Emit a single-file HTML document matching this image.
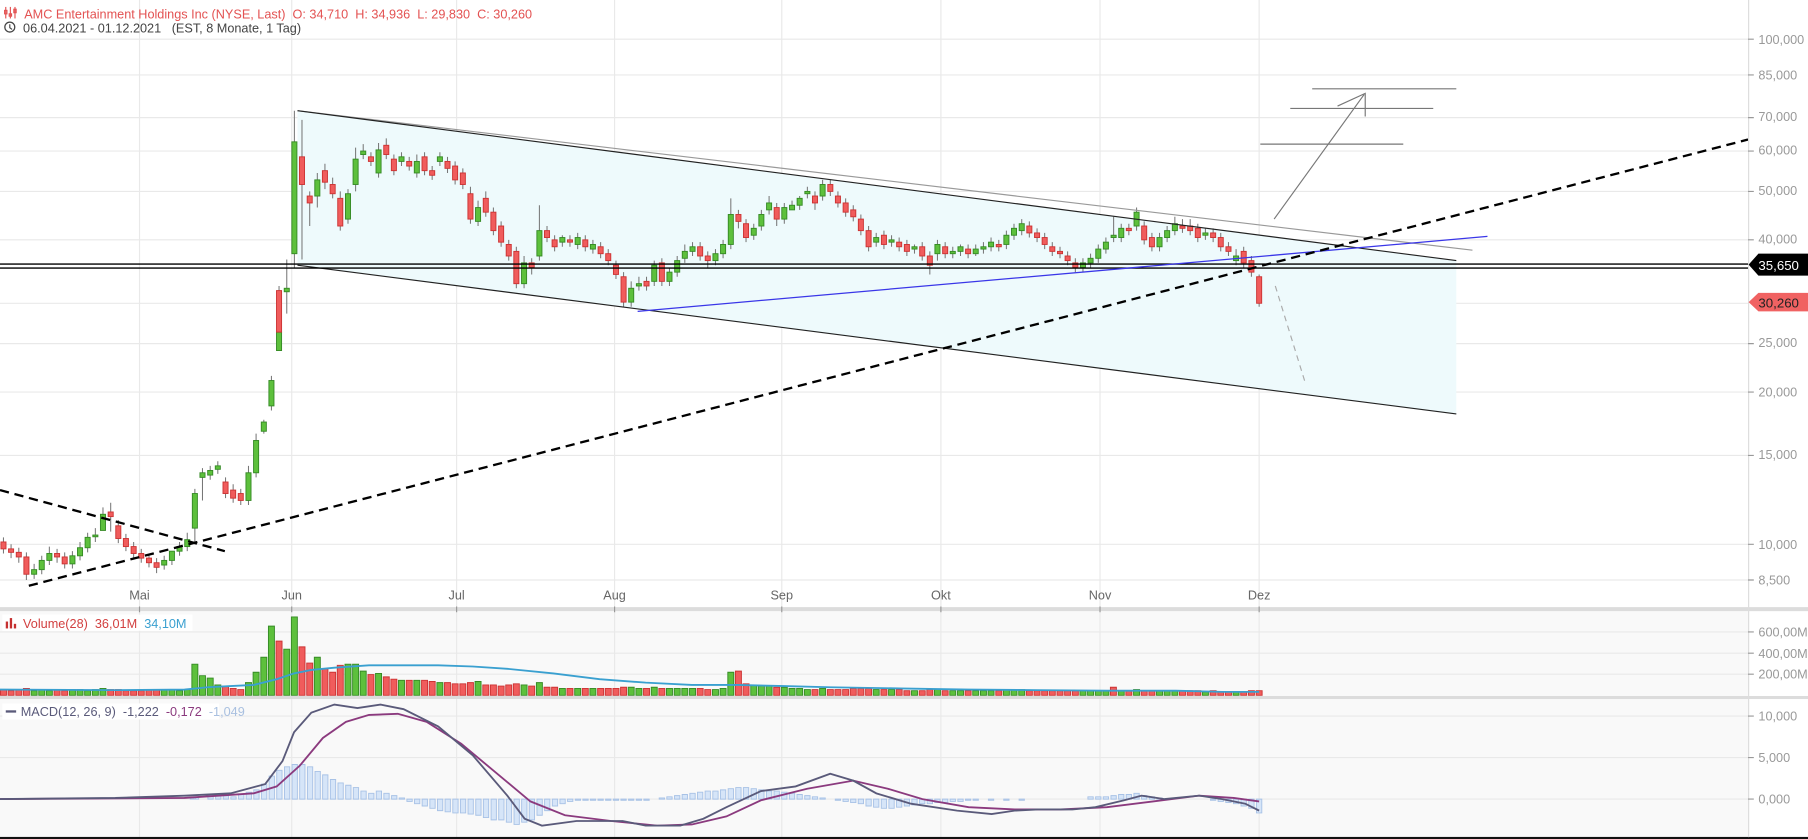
<!DOCTYPE html>
<html><head><meta charset="utf-8"><style>
html,body{margin:0;padding:0;background:#fff;overflow:hidden}
svg{display:block}
text{font-family:"Liberation Sans",Arial,sans-serif}
.g{fill:#5dc03c;stroke:#358a25;stroke-width:.8}
.r{fill:#f05c5c;stroke:#c33;stroke-width:.8}
.h{fill:#d6e5f8;stroke:#a8c2e6;stroke-width:.8}
</style></head><body>
<svg width="1808" height="839" viewBox="0 0 1568 727.6" preserveAspectRatio="none" xmlns="http://www.w3.org/2000/svg">
<rect x="0" y="0" width="1568" height="728" fill="#fff"/>
<rect x="0" y="530" width="1516" height="73.6" fill="#f9f9f9"/>
<rect x="0" y="606.2" width="1516" height="119.6" fill="#f9f9f9"/>
<g stroke="#e9e9e9" stroke-width="1">
<path d="M0 34H1516M0 65H1516M0 102H1516M0 131H1516M0 166H1516M0 208H1516M0 263H1516M0 298H1516M0 340H1516M0 395H1516M0 472H1516M0 503H1516M0 548H1516M0 566.5H1516M0 584.7H1516M0 621H1516M0 657H1516M0 693H1516"/>
<path d="M121 0V726M253 0V726M396 0V726M533 0V726M678 0V726M816 0V726M954 0V726M1092 0V726"/>
</g>
<polygon points="258,96 1263,226 1263,359 258,230" fill="#eefafc"/>

<!-- wicks -->
<path fill="none" stroke="#777" stroke-width="0.9" d="M3 466V480M9.6 472V484M16.3 475V488M22.9 479V503M29.6 489V502M36.2 482V498M42.8 474V490M49.5 476V488M56.1 479V493M62.8 478V493M69.4 470V486M76 462V479M82.7 458V470M89.3 440V456M96 436V461M102.6 451V471M109.2 463V478M115.9 470V484M122.5 476V488M129.2 480V492M135.8 484V497M142.4 482V494M149.1 478V490M155.7 470V482M162.4 462V478M169 424V472M175.6 406V434M182.3 404V416M188.9 400V411M195.6 414V432M202.2 420V436M208.8 424V438M215.5 404V438M222.1 376V414M228.8 364V376M235.4 326V356M242 248V300M248.7 225V272M255.3 96V232M261.9 104V225M268.6 166V196M275.2 150V180M281.8 142V164M288.5 154V172M295.1 166V200M301.8 164V194M308.4 128V166M315 125V138M321.7 132V144M328.3 124V154M335 120V138M341.6 134V152M348.2 132V144M354.9 136V148M361.5 134V154M368.2 132V152M374.8 144V156M381.5 132V144M388.1 136V150M394.7 140V160M401.4 146V164M408 162V194M414.6 174V196M421.3 166V188M427.9 180V204M434.6 192V214M441.2 208V226M447.8 214V250M454.5 222V250M461.1 224V238M467.8 178V226M474.4 196V210M481 204V218M487.7 204V214M494.3 204V214M501 202V216M507.6 204V218M514.2 208V220M520.9 210V224M527.5 216V230M534.2 226V242M540.8 236V266M547.4 244V266M554.1 240V252M560.7 240V252M567.4 226V248M574 224V248M580.6 232V248M587.3 222V240M593.9 212V228M600.6 210V222M607.2 210V226M613.8 218V232M620.5 216V230M627.1 208V224M633.8 172V216M640.4 182V198M647 190V210M653.7 194V208M660.3 182V200M667 170V186M673.6 176V196M680.2 176V194M686.9 174V182M693.5 170V182M700.2 162V172M706.8 166V182M713.4 156V174M720.1 156V170M726.7 166V180M733.4 172V188M740 178V192M746.6 186V204M753.3 196V218M759.9 202V214M766.6 200V216M773.2 204V214M779.8 206V218M786.5 208V222M793.1 212V220M799.8 210V226M806.4 218V238M813 208V226M819.7 210V224M826.3 214V224M833 212V222M839.6 212V224M846.2 212V222M852.9 210V220M859.5 206V218M866.2 208V218M872.8 200V216M879.4 194V208M886.1 190V204M892.7 192V206M899.4 198V210M906 202V216M912.6 210V222M919.3 214V224M925.9 218V230M932.6 224V236M939.2 224V236M945.8 220V232M952.5 212V228M959.1 206V220M965.8 188V210M972.4 194V210M979 194V204M985.7 180V200M992.3 192V212M999 202V218M1005.6 202V218M1012.2 196V210M1018.9 188V204M1025.5 190V202M1032.2 190V204M1038.8 194V210M1045.4 198V208M1052.1 198V210M1058.7 202V218M1065.4 210V222M1072 216V230M1078.6 214V232M1085.3 222V240M1092 238V266"/>

<!-- bodies -->
<rect class="r" x="0.8" y="470" width="4.4" height="6"/>
<rect class="r" x="7.4" y="476" width="4.4" height="3"/>
<rect class="r" x="14.1" y="479" width="4.4" height="4"/>
<rect class="r" x="20.7" y="483" width="4.4" height="15"/>
<rect class="g" x="27.4" y="494" width="4.4" height="4"/>
<rect class="g" x="34" y="486" width="4.4" height="8"/>
<rect class="g" x="40.6" y="480" width="4.4" height="6"/>
<rect class="r" x="47.3" y="480" width="4.4" height="3"/>
<rect class="r" x="53.9" y="483" width="4.4" height="6"/>
<rect class="g" x="60.6" y="482" width="4.4" height="7"/>
<rect class="g" x="67.2" y="475" width="4.4" height="7"/>
<rect class="g" x="73.8" y="466" width="4.4" height="9"/>
<rect class="g" x="80.5" y="464" width="4.4" height="1.5"/>
<rect class="g" x="87.1" y="446" width="4.4" height="14"/>
<rect class="r" x="93.8" y="444" width="4.4" height="4"/>
<rect class="r" x="100.4" y="456" width="4.4" height="11"/>
<rect class="r" x="107" y="467" width="4.4" height="7"/>
<rect class="r" x="113.7" y="474" width="4.4" height="6"/>
<rect class="r" x="120.3" y="480" width="4.4" height="4"/>
<rect class="r" x="127" y="484" width="4.4" height="4"/>
<rect class="r" x="133.6" y="488" width="4.4" height="4"/>
<rect class="g" x="140.2" y="486" width="4.4" height="4"/>
<rect class="g" x="146.9" y="478" width="4.4" height="8"/>
<rect class="g" x="153.5" y="474" width="4.4" height="4"/>
<rect class="g" x="160.2" y="468" width="4.4" height="6"/>
<rect class="g" x="166.8" y="428" width="4.4" height="30"/>
<rect class="g" x="173.4" y="410" width="4.4" height="4"/>
<rect class="g" x="180.1" y="408" width="4.4" height="4"/>
<rect class="g" x="186.7" y="404" width="4.4" height="3"/>
<rect class="r" x="193.4" y="418" width="4.4" height="10"/>
<rect class="r" x="200" y="425" width="4.4" height="7"/>
<rect class="r" x="206.6" y="428" width="4.4" height="6"/>
<rect class="g" x="213.3" y="410" width="4.4" height="24"/>
<rect class="g" x="219.9" y="382" width="4.4" height="28"/>
<rect class="g" x="226.6" y="366" width="4.4" height="8"/>
<rect class="g" x="233.2" y="330" width="4.4" height="22"/>
<rect class="g" x="239.8" y="288" width="4.4" height="16"/>
<rect class="r" x="239.8" y="252" width="4.4" height="36"/>
<rect class="g" x="246.5" y="250" width="4.4" height="3"/>
<rect class="g" x="253.1" y="123" width="4.4" height="97"/>
<rect class="r" x="259.7" y="136" width="4.4" height="24"/>
<rect class="r" x="266.4" y="170" width="4.4" height="6"/>
<rect class="g" x="273" y="156" width="4.4" height="14"/>
<rect class="r" x="279.6" y="148" width="4.4" height="10"/>
<rect class="r" x="286.3" y="160" width="4.4" height="8"/>
<rect class="r" x="292.9" y="172" width="4.4" height="24"/>
<rect class="g" x="299.6" y="168" width="4.4" height="22"/>
<rect class="g" x="306.2" y="138" width="4.4" height="22"/>
<rect class="g" x="312.8" y="131" width="4.4" height="3"/>
<rect class="r" x="319.5" y="136" width="4.4" height="4"/>
<rect class="g" x="326.1" y="130" width="4.4" height="20"/>
<rect class="r" x="332.8" y="126" width="4.4" height="8"/>
<rect class="r" x="339.4" y="138" width="4.4" height="10"/>
<rect class="g" x="346" y="136" width="4.4" height="4"/>
<rect class="r" x="352.7" y="140" width="4.4" height="4"/>
<rect class="g" x="359.3" y="140" width="4.4" height="10"/>
<rect class="r" x="366" y="136" width="4.4" height="12"/>
<rect class="r" x="372.6" y="148" width="4.4" height="4"/>
<rect class="g" x="379.3" y="136" width="4.4" height="4"/>
<rect class="r" x="385.9" y="140" width="4.4" height="6"/>
<rect class="r" x="392.5" y="144" width="4.4" height="12"/>
<rect class="r" x="399.2" y="150" width="4.4" height="10"/>
<rect class="r" x="405.8" y="168" width="4.4" height="22"/>
<rect class="g" x="412.4" y="180" width="4.4" height="12"/>
<rect class="r" x="419.1" y="172" width="4.4" height="12"/>
<rect class="r" x="425.7" y="184" width="4.4" height="16"/>
<rect class="r" x="432.4" y="196" width="4.4" height="14"/>
<rect class="r" x="439" y="212" width="4.4" height="10"/>
<rect class="r" x="445.6" y="218" width="4.4" height="28"/>
<rect class="g" x="452.3" y="228" width="4.4" height="18"/>
<rect class="r" x="458.9" y="228" width="4.4" height="4"/>
<rect class="g" x="465.6" y="200" width="4.4" height="22"/>
<rect class="r" x="472.2" y="200" width="4.4" height="6"/>
<rect class="r" x="478.8" y="208" width="4.4" height="6"/>
<rect class="g" x="485.5" y="206" width="4.4" height="4"/>
<rect class="r" x="492.1" y="208" width="4.4" height="2"/>
<rect class="g" x="498.8" y="206" width="4.4" height="6"/>
<rect class="r" x="505.4" y="208" width="4.4" height="6"/>
<rect class="g" x="512" y="212" width="4.4" height="4"/>
<rect class="r" x="518.7" y="214" width="4.4" height="6"/>
<rect class="r" x="525.3" y="220" width="4.4" height="6"/>
<rect class="r" x="532" y="230" width="4.4" height="8"/>
<rect class="r" x="538.6" y="240" width="4.4" height="22"/>
<rect class="g" x="545.2" y="250" width="4.4" height="12"/>
<rect class="g" x="551.9" y="246" width="4.4" height="2"/>
<rect class="r" x="558.5" y="244" width="4.4" height="4"/>
<rect class="g" x="565.2" y="230" width="4.4" height="14"/>
<rect class="r" x="571.8" y="228" width="4.4" height="16"/>
<rect class="g" x="578.4" y="236" width="4.4" height="8"/>
<rect class="g" x="585.1" y="226" width="4.4" height="10"/>
<rect class="g" x="591.7" y="218" width="4.4" height="6"/>
<rect class="g" x="598.4" y="214" width="4.4" height="4"/>
<rect class="r" x="605" y="214" width="4.4" height="8"/>
<rect class="r" x="611.6" y="222" width="4.4" height="4"/>
<rect class="g" x="618.3" y="220" width="4.4" height="6"/>
<rect class="g" x="624.9" y="212" width="4.4" height="8"/>
<rect class="g" x="631.6" y="186" width="4.4" height="26"/>
<rect class="r" x="638.2" y="186" width="4.4" height="6"/>
<rect class="r" x="644.8" y="194" width="4.4" height="12"/>
<rect class="g" x="651.5" y="198" width="4.4" height="6"/>
<rect class="g" x="658.1" y="186" width="4.4" height="10"/>
<rect class="g" x="664.8" y="176" width="4.4" height="6"/>
<rect class="r" x="671.4" y="180" width="4.4" height="10"/>
<rect class="g" x="678" y="180" width="4.4" height="10"/>
<rect class="g" x="684.7" y="178" width="4.4" height="4"/>
<rect class="g" x="691.3" y="172" width="4.4" height="6"/>
<rect class="g" x="698" y="166" width="4.4" height="2"/>
<rect class="r" x="704.6" y="170" width="4.4" height="6"/>
<rect class="g" x="711.2" y="160" width="4.4" height="10"/>
<rect class="r" x="717.9" y="160" width="4.4" height="6"/>
<rect class="r" x="724.5" y="170" width="4.4" height="6"/>
<rect class="r" x="731.2" y="176" width="4.4" height="8"/>
<rect class="r" x="737.8" y="182" width="4.4" height="6"/>
<rect class="r" x="744.4" y="190" width="4.4" height="10"/>
<rect class="r" x="751.1" y="200" width="4.4" height="14"/>
<rect class="g" x="757.7" y="206" width="4.4" height="4"/>
<rect class="r" x="764.4" y="204" width="4.4" height="8"/>
<rect class="g" x="771" y="208" width="4.4" height="2"/>
<rect class="r" x="777.6" y="210" width="4.4" height="4"/>
<rect class="r" x="784.3" y="212" width="4.4" height="6"/>
<rect class="g" x="790.9" y="214" width="4.4" height="2"/>
<rect class="r" x="797.6" y="214" width="4.4" height="8"/>
<rect class="r" x="804.2" y="222" width="4.4" height="8"/>
<rect class="g" x="810.8" y="212" width="4.4" height="8"/>
<rect class="r" x="817.5" y="214" width="4.4" height="6"/>
<rect class="g" x="824.1" y="218" width="4.4" height="2"/>
<rect class="g" x="830.8" y="214" width="4.4" height="4"/>
<rect class="r" x="837.4" y="216" width="4.4" height="4"/>
<rect class="g" x="844" y="216" width="4.4" height="4"/>
<rect class="g" x="850.7" y="214" width="4.4" height="2"/>
<rect class="g" x="857.3" y="210" width="4.4" height="4"/>
<rect class="r" x="864" y="212" width="4.4" height="2"/>
<rect class="g" x="870.6" y="204" width="4.4" height="8"/>
<rect class="g" x="877.2" y="198" width="4.4" height="6"/>
<rect class="g" x="883.9" y="194" width="4.4" height="6"/>
<rect class="r" x="890.5" y="196" width="4.4" height="6"/>
<rect class="r" x="897.2" y="202" width="4.4" height="4"/>
<rect class="r" x="903.8" y="206" width="4.4" height="6"/>
<rect class="r" x="910.4" y="214" width="4.4" height="4"/>
<rect class="r" x="917.1" y="218" width="4.4" height="2"/>
<rect class="r" x="923.7" y="222" width="4.4" height="4"/>
<rect class="r" x="930.4" y="228" width="4.4" height="4"/>
<rect class="g" x="937" y="228" width="4.4" height="4"/>
<rect class="g" x="943.6" y="224" width="4.4" height="4"/>
<rect class="g" x="950.3" y="216" width="4.4" height="8"/>
<rect class="g" x="956.9" y="210" width="4.4" height="6"/>
<rect class="g" x="963.6" y="204" width="4.4" height="2"/>
<rect class="g" x="970.2" y="198" width="4.4" height="8"/>
<rect class="r" x="976.8" y="198" width="4.4" height="2"/>
<rect class="g" x="983.5" y="184" width="4.4" height="12"/>
<rect class="r" x="990.1" y="196" width="4.4" height="12"/>
<rect class="r" x="996.8" y="206" width="4.4" height="8"/>
<rect class="g" x="1003.4" y="206" width="4.4" height="8"/>
<rect class="g" x="1010" y="200" width="4.4" height="6"/>
<rect class="g" x="1016.7" y="194" width="4.4" height="6"/>
<rect class="r" x="1023.3" y="196" width="4.4" height="2"/>
<rect class="r" x="1030" y="196" width="4.4" height="4"/>
<rect class="r" x="1036.6" y="198" width="4.4" height="8"/>
<rect class="g" x="1043.2" y="202" width="4.4" height="2"/>
<rect class="r" x="1049.9" y="202" width="4.4" height="4"/>
<rect class="r" x="1056.5" y="206" width="4.4" height="8"/>
<rect class="r" x="1063.2" y="214" width="4.4" height="4"/>
<rect class="g" x="1069.8" y="222" width="4.4" height="4"/>
<rect class="r" x="1076.4" y="218" width="4.4" height="10"/>
<rect class="r" x="1083.1" y="226" width="4.4" height="10"/>
<rect class="r" x="1089.8" y="240" width="4.4" height="23"/>

<!-- volume bars -->
<g>
<path fill="#f05c5c" stroke="#c33" stroke-width=".8" d="M0.4 598h5.2v5h-5.2zM7 599h5.2v4h-5.2zM13.7 598h5.2v5h-5.2zM20.3 597h5.2v6h-5.2zM46.9 598h5.2v5h-5.2zM53.5 599h5.2v4h-5.2zM93.4 598h5.2v5h-5.2zM100 598h5.2v5h-5.2zM106.6 599h5.2v4h-5.2zM113.3 599h5.2v4h-5.2zM119.9 599h5.2v4h-5.2zM126.6 598h5.2v5h-5.2zM133.2 598h5.2v5h-5.2zM193 595h5.2v8h-5.2zM199.6 597h5.2v6h-5.2zM206.2 598h5.2v5h-5.2zM239.4 556h5.2v47h-5.2zM259.3 561h5.2v42h-5.2zM266 575h5.2v28h-5.2zM279.2 580h5.2v23h-5.2zM285.9 583h5.2v20h-5.2zM292.5 577h5.2v26h-5.2zM319.1 585h5.2v18h-5.2zM332.4 587h5.2v16h-5.2zM339 589h5.2v14h-5.2zM352.3 590h5.2v13h-5.2zM365.6 590h5.2v13h-5.2zM372.2 591h5.2v12h-5.2zM385.5 592h5.2v11h-5.2zM392.1 593h5.2v10h-5.2zM398.8 593h5.2v10h-5.2zM405.4 592h5.2v11h-5.2zM418.7 594h5.2v9h-5.2zM425.3 594h5.2v9h-5.2zM432 595h5.2v8h-5.2zM438.6 594h5.2v9h-5.2zM445.2 593h5.2v10h-5.2zM458.5 595h5.2v8h-5.2zM471.8 596h5.2v7h-5.2zM478.4 596h5.2v7h-5.2zM491.7 597h5.2v6h-5.2zM505 597h5.2v6h-5.2zM518.3 597h5.2v6h-5.2zM524.9 597h5.2v6h-5.2zM531.6 597h5.2v6h-5.2zM538.2 596h5.2v7h-5.2zM558.1 597h5.2v6h-5.2zM571.4 597h5.2v6h-5.2zM604.6 597h5.2v6h-5.2zM611.2 598h5.2v5h-5.2zM637.8 582h5.2v21h-5.2zM644.4 593h5.2v10h-5.2zM671 596h5.2v7h-5.2zM704.2 598h5.2v5h-5.2zM717.5 598h5.2v5h-5.2zM724.1 598h5.2v5h-5.2zM730.8 598h5.2v5h-5.2zM737.4 597h5.2v6h-5.2zM744 597h5.2v6h-5.2zM750.7 597h5.2v6h-5.2zM764 598h5.2v5h-5.2zM777.2 598h5.2v5h-5.2zM783.9 599h5.2v4h-5.2zM797.2 599h5.2v4h-5.2zM803.8 598h5.2v5h-5.2zM817.1 599h5.2v4h-5.2zM837 599h5.2v4h-5.2zM863.6 599h5.2v4h-5.2zM890.1 599h5.2v4h-5.2zM896.8 599h5.2v4h-5.2zM903.4 599h5.2v4h-5.2zM910 599h5.2v4h-5.2zM916.7 599h5.2v4h-5.2zM923.3 599h5.2v4h-5.2zM930 599h5.2v4h-5.2zM963 596h5.2v7h-5.2zM976.4 599h5.2v4h-5.2zM989.7 599h5.2v4h-5.2zM996.4 599h5.2v4h-5.2zM1022.9 599h5.2v4h-5.2zM1029.6 599h5.2v4h-5.2zM1036.2 599h5.2v4h-5.2zM1049.5 599h5.2v4h-5.2zM1056.1 600h5.2v3h-5.2zM1062.8 600h5.2v3h-5.2zM1076 600h5.2v3h-5.2zM1082.7 599h5.2v4h-5.2zM1089.4 599h5.2v4h-5.2z"/>
<path fill="#5dc03c" stroke="#358a25" stroke-width=".8" d="M27 599h5.2v4h-5.2zM33.6 598h5.2v5h-5.2zM40.2 599h5.2v4h-5.2zM60.2 598h5.2v5h-5.2zM66.8 598h5.2v5h-5.2zM73.4 599h5.2v4h-5.2zM80.1 598h5.2v5h-5.2zM86.7 597h5.2v6h-5.2zM139.8 598h5.2v5h-5.2zM146.5 598h5.2v5h-5.2zM153.1 599h5.2v4h-5.2zM159.8 598h5.2v5h-5.2zM166.4 576h5.2v27h-5.2zM173 586h5.2v17h-5.2zM179.7 588h5.2v15h-5.2zM186.3 594h5.2v9h-5.2zM212.9 592h5.2v11h-5.2zM219.5 583h5.2v20h-5.2zM226.2 570h5.2v33h-5.2zM232.8 543h5.2v60h-5.2zM246.1 563h5.2v40h-5.2zM252.7 535h5.2v68h-5.2zM272.6 570h5.2v33h-5.2zM299.2 576h5.2v27h-5.2zM305.8 576h5.2v27h-5.2zM312.4 582h5.2v21h-5.2zM325.7 584h5.2v19h-5.2zM345.6 590h5.2v13h-5.2zM358.9 590h5.2v13h-5.2zM378.9 592h5.2v11h-5.2zM412 591h5.2v12h-5.2zM451.9 594h5.2v9h-5.2zM465.2 592h5.2v11h-5.2zM485.1 597h5.2v6h-5.2zM498.4 597h5.2v6h-5.2zM511.6 597h5.2v6h-5.2zM544.8 596h5.2v7h-5.2zM551.5 597h5.2v6h-5.2zM564.8 596h5.2v7h-5.2zM578 597h5.2v6h-5.2zM584.7 597h5.2v6h-5.2zM591.3 597h5.2v6h-5.2zM598 597h5.2v6h-5.2zM617.9 598h5.2v5h-5.2zM624.5 597h5.2v6h-5.2zM631.2 583h5.2v20h-5.2zM651.1 594h5.2v9h-5.2zM657.7 595h5.2v8h-5.2zM664.4 595h5.2v8h-5.2zM677.6 596h5.2v7h-5.2zM684.3 597h5.2v6h-5.2zM690.9 597h5.2v6h-5.2zM697.6 598h5.2v5h-5.2zM710.8 597h5.2v6h-5.2zM757.3 598h5.2v5h-5.2zM770.6 598h5.2v5h-5.2zM790.5 599h5.2v4h-5.2zM810.4 598h5.2v5h-5.2zM823.7 599h5.2v4h-5.2zM830.4 599h5.2v4h-5.2zM843.6 599h5.2v4h-5.2zM850.3 599h5.2v4h-5.2zM856.9 599h5.2v4h-5.2zM870.2 598h5.2v5h-5.2zM876.8 598h5.2v5h-5.2zM883.5 598h5.2v5h-5.2zM936.6 599h5.2v4h-5.2zM943.2 599h5.2v4h-5.2zM949.9 599h5.2v4h-5.2zM956.5 599h5.2v4h-5.2zM969.8 599h5.2v4h-5.2zM983.1 598h5.2v5h-5.2zM1003 599h5.2v4h-5.2zM1009.6 599h5.2v4h-5.2zM1016.3 599h5.2v4h-5.2zM1042.8 600h5.2v3h-5.2zM1069.4 600h5.2v3h-5.2z"/>
<polyline fill="none" stroke="#3aa0d0" stroke-width="1.6" points="0,598 100,598.5 160,598 180,596 200,595 220,594 240,589 255,584 270,581 290,579 320,577 350,577 380,577 410,578 440,580 480,584 520,589 560,592 600,594 640,594 680,595 720,596 780,597 840,598 900,598.5 960,599 1020,599 1060,600 1092,600"/>
</g>

<!-- MACD histogram -->
<path class="h" d="M165 692h4.6v1h-4.6zM167.7 691h4.6v2h-4.6zM180.3 690h4.6v3h-4.6zM187 689h4.6v4h-4.6zM193.6 690h4.6v3h-4.6zM200.2 691h4.6v2h-4.6zM206.9 689h4.6v4h-4.6zM213.5 687h4.6v6h-4.6zM220.1 685h4.6v8h-4.6zM226.8 680h4.6v13h-4.6zM233.4 673h4.6v20h-4.6zM240 668h4.6v25h-4.6zM246.7 665h4.6v28h-4.6zM253.3 663h4.6v30h-4.6zM259.9 663h4.6v30h-4.6zM266.6 665h4.6v28h-4.6zM273.2 669h4.6v24h-4.6zM279.8 672h4.6v21h-4.6zM286.5 676h4.6v17h-4.6zM293.1 679h4.6v14h-4.6zM299.8 681h4.6v12h-4.6zM306.4 683h4.6v10h-4.6zM313 686h4.6v7h-4.6zM319.7 688h4.6v5h-4.6zM326.3 686h4.6v7h-4.6zM332.9 688h4.6v5h-4.6zM339.6 690h4.6v3h-4.6zM346.2 692h4.6v1h-4.6zM352.9 693h4.6v2h-4.6zM359.5 693h4.6v4h-4.6zM366.1 693h4.6v6h-4.6zM372.8 693h4.6v8h-4.6zM379.4 693h4.6v10h-4.6zM386 693h4.6v11h-4.6zM392.7 693h4.6v12h-4.6zM399.3 693h4.6v12h-4.6zM405.9 693h4.6v13h-4.6zM412.6 693h4.6v14h-4.6zM419.2 693h4.6v16h-4.6zM425.9 693h4.6v18h-4.6zM432.5 693h4.6v18h-4.6zM439.1 693h4.6v20h-4.6zM445.8 693h4.6v22h-4.6zM452.4 693h4.6v20h-4.6zM459 693h4.6v18h-4.6zM465.7 693h4.6v14h-4.6zM472.3 693h4.6v10h-4.6zM479 693h4.6v6h-4.6zM485.6 693h4.6v4h-4.6zM492.2 693h4.6v2h-4.6zM498.9 693h4.6v1h-4.6zM505.5 693h4.6v1h-4.6zM512 693h4.6v1h-4.6zM518.6 693h4.6v1h-4.6zM525.2 693h4.6v1h-4.6zM531.9 693h4.6v1h-4.6zM538.5 693h4.6v1h-4.6zM545.1 693h4.6v1h-4.6zM551.8 693h4.6v1h-4.6zM558.4 693h4.6v1h-4.6zM571.7 692h4.6v1h-4.6zM578.3 691h4.6v2h-4.6zM585 690h4.6v3h-4.6zM591.6 689h4.6v4h-4.6zM598.3 688h4.6v5h-4.6zM604.9 687h4.6v6h-4.6zM611.5 686h4.6v7h-4.6zM618.2 686h4.6v7h-4.6zM624.8 685h4.6v8h-4.6zM631.5 684h4.6v9h-4.6zM638.1 683h4.6v10h-4.6zM644.7 683h4.6v10h-4.6zM651.4 684h4.6v9h-4.6zM658 685h4.6v8h-4.6zM664.7 686h4.6v7h-4.6zM671.3 686h4.6v7h-4.6zM677.9 687h4.6v6h-4.6zM684.6 688h4.6v5h-4.6zM691.2 689h4.6v4h-4.6zM697.9 690h4.6v3h-4.6zM704.5 691h4.6v2h-4.6zM711.1 692h4.6v1h-4.6zM724.4 693h4.6v1h-4.6zM731.1 693h4.6v2h-4.6zM737.7 693h4.6v3h-4.6zM744.3 693h4.6v4h-4.6zM751 693h4.6v6h-4.6zM757.6 693h4.6v7h-4.6zM764.3 693h4.6v8h-4.6zM770.9 693h4.6v8h-4.6zM777.5 693h4.6v7h-4.6zM784.2 693h4.6v6h-4.6zM790.8 693h4.6v5h-4.6zM797.5 693h4.6v4h-4.6zM804.1 693h4.6v4h-4.6zM810.7 693h4.6v3h-4.6zM817.4 693h4.6v3h-4.6zM824 693h4.6v2h-4.6zM830.7 693h4.6v2h-4.6zM837.3 693h4.6v1h-4.6zM843.9 693h4.6v1h-4.6zM857.2 693h4.6v1h-4.6zM870.5 693h4.6v1h-4.6zM883.8 693h4.6v1h-4.6zM943.5 691h4.6v2h-4.6zM950.2 691h4.6v2h-4.6zM956.8 691h4.6v2h-4.6zM963.5 690h4.6v3h-4.6zM970.1 689h4.6v4h-4.6zM976.7 689h4.6v4h-4.6zM983.4 688h4.6v5h-4.6zM990 690h4.6v3h-4.6zM996.7 691h4.6v2h-4.6zM1003.3 692h4.6v1h-4.6zM1049.8 693h4.6v1h-4.6zM1056.4 693h4.6v2h-4.6zM1063.1 693h4.6v3h-4.6zM1069.7 693h4.6v4h-4.6zM1076.3 693h4.6v6h-4.6zM1083 693h4.6v8h-4.6zM1089.7 693h4.6v12h-4.6z"/>
<polyline fill="none" stroke="#8b3a7e" stroke-width="1.6" points="0,693 160,692 220,688 240,682 260,664 280,640 300,626 320,620 345,619 370,626 400,645 430,670 460,695 490,707 530,712 570,716 600,715 630,708 660,694 700,684 740,677 770,684 800,693 840,700 880,702 920,702 960,700 1000,695 1040,690 1070,692 1092,695"/>
<polyline fill="none" stroke="#5a5a7a" stroke-width="1.6" points="0,693 100,692 160,690 200,688 230,680 245,660 255,635 270,618 290,611 310,614 330,611 350,615 380,630 410,655 440,690 455,710 470,716 500,712 540,712 560,716 590,716 610,710 630,700 660,686 690,682 720,671 740,677 760,688 790,697 830,703 860,706 880,703 900,702 930,702 950,700 975,694 990,690 1010,693 1040,690 1060,693 1080,697 1092,703"/>

<!-- drawings -->
<line x1="258" y1="96" x2="1277" y2="217" stroke="#999" stroke-width="1"/>
<line x1="258" y1="96" x2="1263" y2="226" stroke="#222" stroke-width="1"/>
<line x1="258" y1="230" x2="1263" y2="359" stroke="#222" stroke-width="1"/>
<line x1="0" y1="229" x2="1516" y2="229" stroke="#000" stroke-width="1.2"/>
<line x1="0" y1="232.5" x2="1516" y2="232.5" stroke="#000" stroke-width="1.2"/>
<line x1="553" y1="270" x2="1290" y2="205" stroke="#3a36e8" stroke-width="1.1"/>
<line x1="25" y1="508" x2="1516" y2="121" stroke="#000" stroke-width="2" stroke-dasharray="8,5"/>
<line x1="0" y1="425" x2="195" y2="478" stroke="#000" stroke-width="2" stroke-dasharray="8,5"/>
<line x1="1106" y1="248" x2="1132" y2="332" stroke="#aaa" stroke-width="1" stroke-dasharray="5,4"/>
<g stroke="#777" stroke-width="1" fill="none">
<line x1="1105" y1="190" x2="1183" y2="82"/>
<polyline points="1160,92 1184,81 1184,101"/>
<line x1="1138" y1="77" x2="1263" y2="77"/>
<line x1="1119" y1="94" x2="1243" y2="94"/>
<line x1="1093" y1="125" x2="1217" y2="125"/>
</g>
<rect x="0" y="526.5" width="1568" height="3.5" fill="#dcdcdc"/>
<rect x="0" y="603.6" width="1568" height="2.6" fill="#dcdcdc"/>
<rect x="0" y="725.8" width="1568" height="2" fill="#111"/>
<line x1="1516.5" y1="0" x2="1516.5" y2="726" stroke="#ddd" stroke-width="1"/>
<path stroke="#999" stroke-width="1" d="M1516 34h5M1516 65h5M1516 102h5M1516 131h5M1516 166h5M1516 208h5M1516 298h5M1516 340h5M1516 395h5M1516 472h5M1516 503h5M1516 548h5M1516 566.5h5M1516 584.7h5M1516 621h5M1516 657h5M1516 693h5M121 526v5M253 526v5M396 526v5M533 526v5M678 526v5M816 526v5M954 526v5M1092 526v5"/>
<g fill="#999" font-size="11">
<text x="1525" y="38">100,000</text>
<text x="1525" y="69">85,000</text>
<text x="1525" y="105">70,000</text>
<text x="1525" y="134">60,000</text>
<text x="1525" y="169">50,000</text>
<text x="1525" y="211">40,000</text>
<text x="1525" y="301">25,000</text>
<text x="1525" y="344">20,000</text>
<text x="1525" y="398">15,000</text>
<text x="1525" y="476">10,000</text>
<text x="1525" y="507">8,500</text>
<text x="1525" y="552">600,00M</text>
<text x="1525" y="570.5">400,00M</text>
<text x="1525" y="588.5">200,00M</text>
<text x="1525" y="625">10,000</text>
<text x="1525" y="661">5,000</text>
<text x="1525" y="697">0,000</text>
</g>
<polygon points="1516.5,229.5 1525,220 1568,220 1568,239 1525,239" fill="#000"/>
<text x="1525" y="234" fill="#fff" font-size="11.5">35,650</text>
<polygon points="1516.5,262 1525,254 1568,254 1568,270 1525,270" fill="#f06262"/>
<text x="1525" y="266.5" fill="#222" font-size="11.5">30,260</text>
<g fill="#666" font-size="11" text-anchor="middle">
<text x="121" y="520">Mai</text>
<text x="253" y="520">Jun</text>
<text x="396" y="520">Jul</text>
<text x="533" y="520">Aug</text>
<text x="678" y="520">Sep</text>
<text x="816" y="520">Okt</text>
<text x="954" y="520">Nov</text>
<text x="1092" y="520">Dez</text>
</g>
<g stroke="#e35252" stroke-width="1" fill="none">
<line x1="5" y1="6" x2="5" y2="16"/><line x1="9" y1="6" x2="9" y2="16"/><line x1="13" y1="6" x2="13" y2="16"/>
<rect x="4" y="9" width="2" height="3"/><rect x="8" y="12" width="2" height="2"/><rect x="12" y="8" width="2" height="3"/>
</g>
<text x="21" y="16" fill="#e35252" font-size="11" xml:space="preserve">AMC Entertainment Holdings Inc (NYSE, Last)  O: 34,710  H: 34,936  L: 29,830  C: 30,260</text>
<circle cx="8.5" cy="23.5" r="4.3" fill="none" stroke="#444" stroke-width="1.1"/>
<polyline points="8.5,21 8.5,24 10.5,25.5" fill="none" stroke="#444" stroke-width="1"/>
<text x="20" y="28" fill="#444" font-size="11" xml:space="preserve">06.04.2021 - 01.12.2021   (EST, 8 Monate, 1 Tag)</text>
<rect x="2" y="533" width="165" height="14" fill="#fff"/>
<g fill="#c53030"><rect x="5" y="539" width="2" height="6"/><rect x="8.5" y="536" width="2" height="9"/><rect x="12" y="541" width="2" height="4"/></g>
<text x="20" y="544.5" font-size="11" fill="#d24040" xml:space="preserve">Volume(28)  36,01M  <tspan fill="#3aa0d0">34,10M</tspan></text>
<rect x="2" y="610" width="188" height="14" fill="#fff"/>
<line x1="5" y1="617" x2="14" y2="617" stroke="#5a5a7a" stroke-width="2"/>
<text x="18" y="621" font-size="11" fill="#5a5a7a" xml:space="preserve">MACD(12, 26, 9)  -1,222  <tspan fill="#8b3a7e">-0,172</tspan>  <tspan fill="#a9c0e0">-1,049</tspan></text>
</svg>
</body></html>
